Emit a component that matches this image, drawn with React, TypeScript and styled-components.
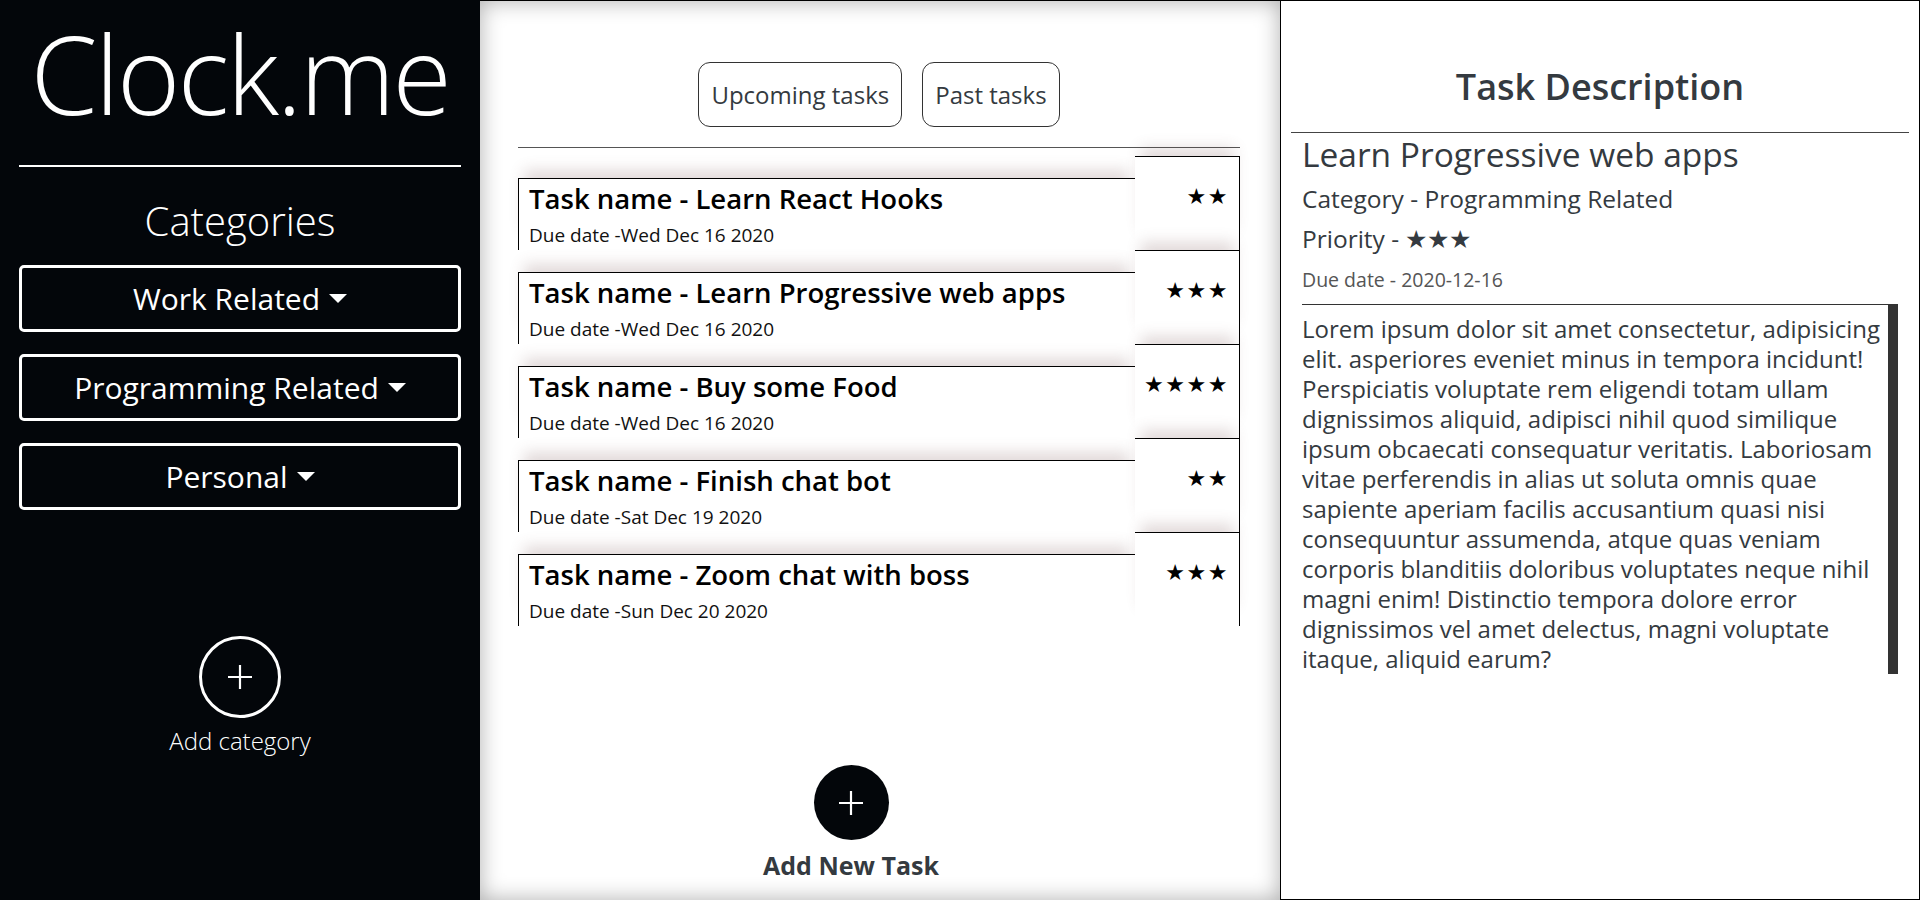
import React from 'react';
import styled, { createGlobalStyle } from 'styled-components';

const GlobalStyle = createGlobalStyle`
  html, body {
    margin: 0;
    padding: 0;
    background: #fff;
  }
  body {
    font-family: "Open Sans", "Noto Sans", "Liberation Sans", sans-serif;
    color: #212529;
  }
  * {
    box-sizing: border-box;
  }
`;

const Page = styled.div`
  display: grid;
  grid-template-columns: 480px 800px 640px;
  height: 900px;
  overflow: hidden;
`;

/* ---------- sidebar ---------- */

const Sidebar = styled.aside`
  background: #03060a;
  color: #fff;
  padding: 0 19px;
  display: flex;
  flex-direction: column;
`;

const Logo = styled.h1`
  margin: 0;
  font-size: 108px;
  line-height: normal;
  font-weight: 300;
  text-align: center;
  letter-spacing: -2.5px;
`;

const WhiteRule = styled.hr`
  border: 0;
  height: 2px;
  background: #fff;
  margin: 18px 0 0;
`;

const SideTitle = styled.h2`
  margin: 30px 0 0;
  font-size: 40px;
  line-height: 48px;
  font-weight: 300;
  text-align: center;
`;

const CategoryList = styled.div`
  display: flex;
  flex-direction: column;
  gap: 22px;
  margin-top: 20px;
`;

const CategoryButton = styled.button`
  height: 67px;
  background: transparent;
  border: 3px solid #fff;
  border-radius: 5px;
  color: #fff;
  font-family: inherit;
  font-size: 30px;
  font-weight: 400;
  cursor: pointer;

  &::after {
    content: '';
    display: inline-block;
    margin-left: 9px;
    vertical-align: 7px;
    border-top: 9px solid #fff;
    border-left: 9px solid transparent;
    border-right: 9px solid transparent;
  }
`;

const AddCategory = styled.div`
  margin-top: 126px;
  display: flex;
  flex-direction: column;
  align-items: center;
  gap: 8px;
`;

const RingButton = styled.button<{ $filled?: boolean; $size: number }>`
  width: ${(p) => p.$size}px;
  height: ${(p) => p.$size}px;
  border-radius: 50%;
  display: flex;
  align-items: center;
  justify-content: center;
  padding: 0;
  cursor: pointer;
  background: ${(p) => (p.$filled ? '#03060a' : 'transparent')};
  border: ${(p) => (p.$filled ? '0' : '3px solid #fff')};
`;

const AddCategoryLabel = styled.span`
  font-size: 24px;
  line-height: 29px;
  font-weight: 300;
`;

/* ---------- task list ---------- */

const Main = styled.main`
  background: #fff;
  border-top: 1px solid #000;
  box-shadow: inset 0 0 22px rgba(0, 0, 0, 0.32);
  padding: 0 40px 19px 38px;
  display: flex;
  flex-direction: column;
`;

const Tabs = styled.div`
  display: flex;
  justify-content: center;
  gap: 20px;
  margin-top: 61px;
`;

const TabButton = styled.button`
  height: 65px;
  padding: 0 12px;
  background: #fff;
  border: 1px solid #333;
  border-radius: 12px;
  font-family: inherit;
  font-size: 24px;
  font-weight: 400;
  color: #343a40;
  cursor: pointer;
`;

const GrayRule = styled.hr`
  border: 0;
  height: 1px;
  background: #555;
  margin: 20px 0 0;
`;

const TaskList = styled.div`
  margin-top: 8px;
  display: flex;
  flex-direction: column;
`;

const TaskCard = styled.div`
  display: flex;
  height: 94px;
`;

const TaskInfo = styled.div`
  flex: 1;
  margin-top: 22px;
  padding: 3px 10px 0;
  background: #fff;
  border-top: 1px solid #000;
  border-left: 1px solid #000;
  box-shadow: 0 -14px 14px -6px rgba(110, 70, 70, 0.2);
`;

const TaskName = styled.h4`
  margin: 0;
  font-size: 27.5px;
  line-height: 34px;
  font-weight: 600;
  color: #000;
`;

const TaskDue = styled.div`
  margin-top: 6px;
  font-size: 19px;
  line-height: 27px;
  color: #111;
`;

const TaskPriority = styled.div`
  width: 105px;
  padding: 27px 10px 0 0;
  text-align: right;
  background: #fff;
  border-top: 1px solid #000;
  border-right: 1px solid #000;
  box-shadow: 0 -14px 14px -6px rgba(110, 70, 70, 0.2);
  font-family: "DejaVu Sans", sans-serif;
  font-size: 22px;
  line-height: 26px;
  letter-spacing: 1.5px;
  color: #000;
`;

const AddTask = styled.div`
  margin-top: auto;
  padding-right: 56px;
  display: flex;
  flex-direction: column;
  align-items: center;
  gap: 9px;
`;

const AddTaskLabel = styled.span`
  font-size: 25px;
  line-height: 32px;
  font-weight: 700;
  color: #343a40;
`;

/* ---------- description ---------- */

const Detail = styled.section`
  background: #fff;
  border: 1px solid #000;
  padding: 0 10px;
  display: flex;
  flex-direction: column;
`;

const DetailHeading = styled.h2`
  margin: 64px 0 0;
  font-size: 36px;
  line-height: 43px;
  font-weight: 600;
  text-align: center;
  color: #343a40;
`;

const DarkRule = styled.hr`
  border: 0;
  height: 1px;
  background: #444;
  margin: 24px 0 0;
`;

const DetailBody = styled.div`
  padding: 0 11px;
  color: #343a40;
`;

const DetailTitle = styled.h3`
  margin: 2px 0 0;
  font-size: 33.5px;
  line-height: 38px;
  font-weight: 400;
`;

const DetailLine = styled.h5`
  margin: 11px 0 0;
  font-size: 24.5px;
  line-height: 29px;
  font-weight: 400;
`;

const DetailDue = styled.div`
  margin-top: 15px;
  font-size: 19.5px;
  line-height: 23px;
  font-weight: 400;
  color: #555;
`;

const Description = styled.p`
  margin: 13px 0 0;
  padding: 9px 0 0;
  border-top: 1px solid #333;
  border-right: 10px solid #333;
  font-size: 24px;
  line-height: 30px;
  color: #343a40;
`;

function PlusIcon({ size }: { size: number }) {
  return (
    <svg width={size} height={size} viewBox="0 0 24 24" fill="none">
      <path d="M12 0v24M0 12h24" stroke="#fff" strokeWidth="2.2" />
    </svg>
  );
}

const categories = ['Work Related', 'Programming Related', 'Personal'];

const tasks = [
  { name: 'Learn React Hooks', due: 'Wed Dec 16 2020', stars: 2 },
  { name: 'Learn Progressive web apps', due: 'Wed Dec 16 2020', stars: 3 },
  { name: 'Buy some Food', due: 'Wed Dec 16 2020', stars: 4 },
  { name: 'Finish chat bot', due: 'Sat Dec 19 2020', stars: 2 },
  { name: 'Zoom chat with boss', due: 'Sun Dec 20 2020', stars: 3 },
];

export default function App() {
  return (
    <>
      <GlobalStyle />
      <Page>
        <Sidebar>
          <Logo>Clock.me</Logo>
          <WhiteRule />
          <SideTitle>Categories</SideTitle>
          <CategoryList>
            {categories.map((c) => (
              <CategoryButton key={c}>{c}</CategoryButton>
            ))}
          </CategoryList>
          <AddCategory>
            <RingButton $size={82}>
              <PlusIcon size={24} />
            </RingButton>
            <AddCategoryLabel>Add category</AddCategoryLabel>
          </AddCategory>
        </Sidebar>

        <Main>
          <Tabs>
            <TabButton>Upcoming tasks</TabButton>
            <TabButton>Past tasks</TabButton>
          </Tabs>
          <GrayRule />
          <TaskList>
            {tasks.map((t) => (
              <TaskCard key={t.name}>
                <TaskInfo>
                  <TaskName>Task name - {t.name}</TaskName>
                  <TaskDue>Due date -{t.due}</TaskDue>
                </TaskInfo>
                <TaskPriority>{'★'.repeat(t.stars)}</TaskPriority>
              </TaskCard>
            ))}
          </TaskList>
          <AddTask>
            <RingButton $size={75} $filled>
              <PlusIcon size={24} />
            </RingButton>
            <AddTaskLabel>Add New Task</AddTaskLabel>
          </AddTask>
        </Main>

        <Detail>
          <DetailHeading>Task Description</DetailHeading>
          <DarkRule />
          <DetailBody>
            <DetailTitle>Learn Progressive web apps</DetailTitle>
            <DetailLine>Category - Programming Related</DetailLine>
            <DetailLine>Priority - ★★★</DetailLine>
            <DetailDue>Due date - 2020-12-16</DetailDue>
            <Description>
              Lorem ipsum dolor sit amet consectetur, adipisicing elit. asperiores eveniet minus in
              tempora incidunt! Perspiciatis voluptate rem eligendi totam ullam dignissimos aliquid,
              adipisci nihil quod similique ipsum obcaecati consequatur veritatis. Laboriosam vitae
              perferendis in alias ut soluta omnis quae sapiente aperiam facilis accusantium quasi
              nisi consequuntur assumenda, atque quas veniam corporis blanditiis doloribus voluptates
              neque nihil magni enim! Distinctio tempora dolore error dignissimos vel amet delectus,
              magni voluptate itaque, aliquid earum?
            </Description>
          </DetailBody>
        </Detail>
      </Page>
    </>
  );
}
